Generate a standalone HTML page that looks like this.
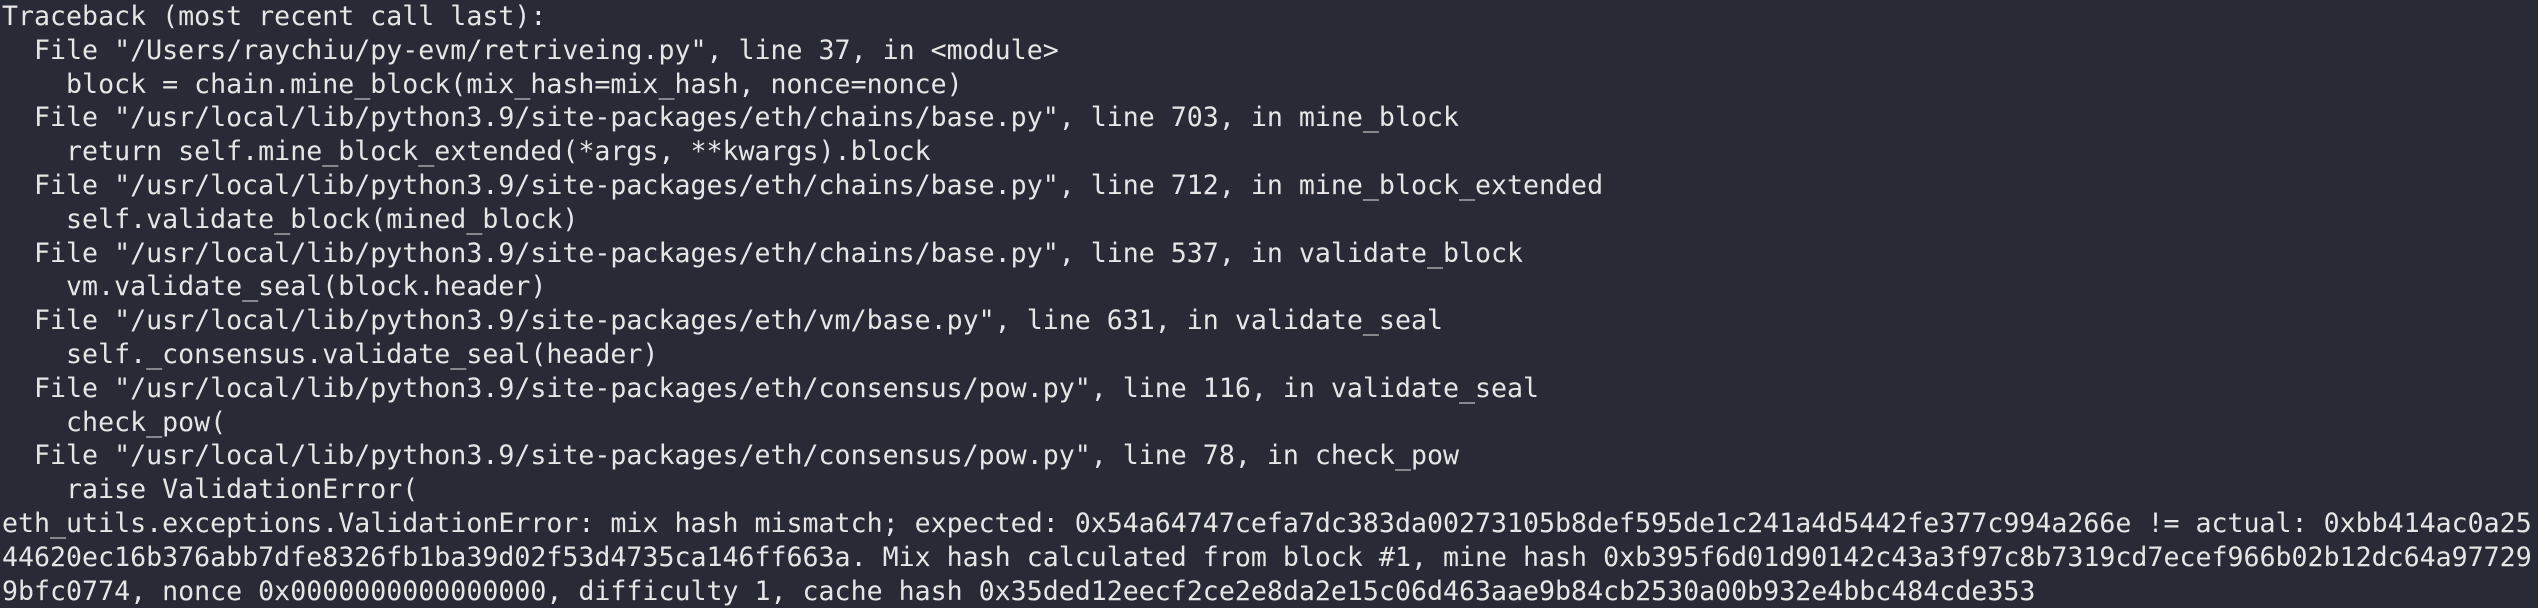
<!DOCTYPE html>
<html><head><style>
html,body{margin:0;padding:0;background:#282a36;width:2538px;height:608px;overflow:hidden}
pre{margin:0;padding:0 0 0 2px;font-family:"DejaVu Sans Mono","Liberation Mono",monospace;font-size:26.6px;line-height:33.8px;color:#e6e6e6;white-space:pre}
</style></head><body><pre>Traceback (most recent call last):
  File "/Users/raychiu/py-evm/retriveing.py", line 37, in &lt;module&gt;
    block = chain.mine_block(mix_hash=mix_hash, nonce=nonce)
  File "/usr/local/lib/python3.9/site-packages/eth/chains/base.py", line 703, in mine_block
    return self.mine_block_extended(*args, **kwargs).block
  File "/usr/local/lib/python3.9/site-packages/eth/chains/base.py", line 712, in mine_block_extended
    self.validate_block(mined_block)
  File "/usr/local/lib/python3.9/site-packages/eth/chains/base.py", line 537, in validate_block
    vm.validate_seal(block.header)
  File "/usr/local/lib/python3.9/site-packages/eth/vm/base.py", line 631, in validate_seal
    self._consensus.validate_seal(header)
  File "/usr/local/lib/python3.9/site-packages/eth/consensus/pow.py", line 116, in validate_seal
    check_pow(
  File "/usr/local/lib/python3.9/site-packages/eth/consensus/pow.py", line 78, in check_pow
    raise ValidationError(
eth_utils.exceptions.ValidationError: mix hash mismatch; expected: 0x54a64747cefa7dc383da00273105b8def595de1c241a4d5442fe377c994a266e != actual: 0xbb414ac0a25
44620ec16b376abb7dfe8326fb1ba39d02f53d4735ca146ff663a. Mix hash calculated from block #1, mine hash 0xb395f6d01d90142c43a3f97c8b7319cd7ecef966b02b12dc64a97729
9bfc0774, nonce 0x0000000000000000, difficulty 1, cache hash 0x35ded12eecf2ce2e8da2e15c06d463aae9b84cb2530a00b932e4bbc484cde353</pre></body></html>
